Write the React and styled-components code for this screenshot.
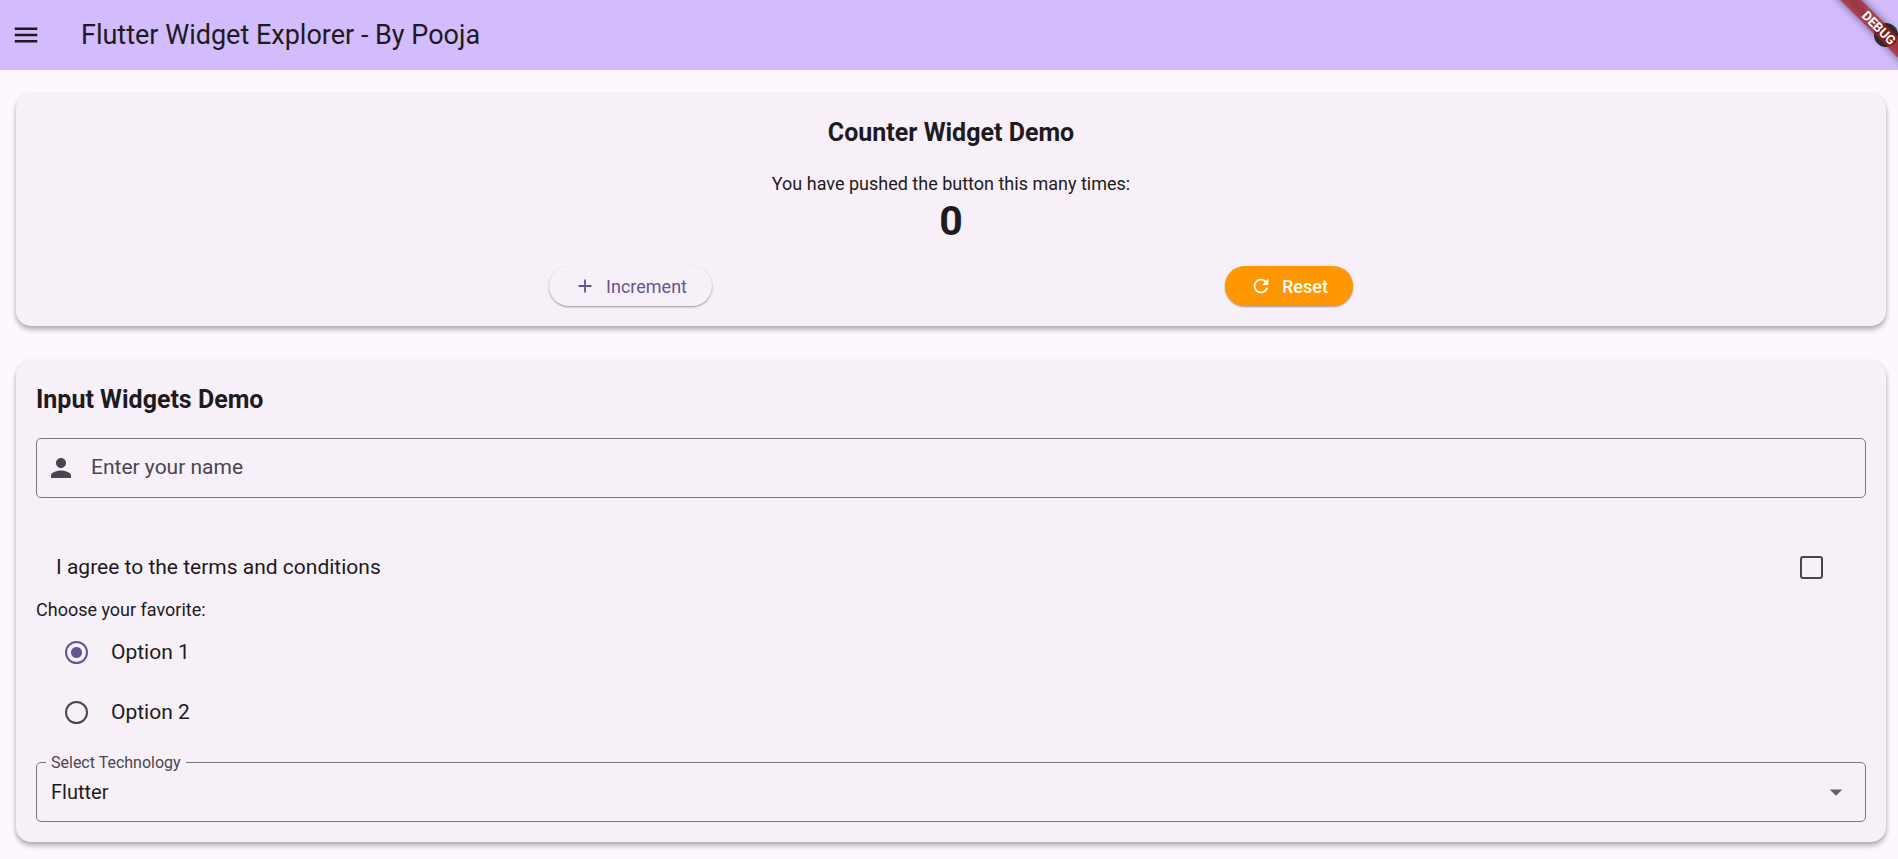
import React, { useState } from "react";
import styled, { createGlobalStyle, css } from "styled-components";

const GlobalStyle = createGlobalStyle`
  *, *::before, *::after { box-sizing: border-box; }
  body {
    margin: 0;
    background: #fef7ff;
    color: #1d1b20;
    font-family: Roboto, "Liberation Sans", sans-serif;
    font-size: 18px;
    overflow-x: hidden;
  }
`;

const AppBar = styled.header`
  position: relative;
  display: flex;
  align-items: center;
  gap: 30px;
  height: 70px;
  padding: 0 0 0 1px;
  background: #d2bcfd;
  overflow: hidden;
`;

const IconButton = styled.button`
  display: grid;
  place-items: center;
  flex: none;
  width: 50px;
  height: 50px;
  padding: 0;
  border: 0;
  border-radius: 50%;
  background: none;
  color: #1d1b20;
  cursor: pointer;
`;

const ThemeButton = styled(IconButton)`
  margin-left: auto;
  margin-right: -13px;
  color: #333333;
`;

const AppTitle = styled.h1`
  margin: 0;
  font-size: 27px;
  line-height: 36px;
  font-weight: 400;
`;

const DebugBanner = styled.svg`
  position: absolute;
  top: 0;
  right: 0;
  pointer-events: none;
`;

const Page = styled.main`
  display: flex;
  flex-direction: column;
  gap: 35px;
  padding: 24px 12px 16px 16px;
`;

const Card = styled.section`
  display: flex;
  flex-direction: column;
  align-items: ${(p) => (p.$centered ? "center" : "stretch")};
  padding: 20px;
  border-radius: 15px;
  background: #f7f0f9;
  box-shadow: 0 4px 5px rgba(0, 0, 0, 0.24), 0 1px 5px rgba(0, 0, 0, 0.12);
`;

const CardTitle = styled.h2`
  margin: 0 0 20px;
  font-size: 25px;
  line-height: 37px;
  font-weight: 700;
`;

const BodyText = styled.p`
  margin: 0;
  line-height: 25px;
`;

const Count = styled.output`
  font-size: 41px;
  line-height: 50px;
  font-weight: 700;
`;

const ButtonRow = styled.div`
  display: flex;
  justify-content: space-evenly;
  align-self: stretch;
  margin-top: 20px;
`;

const PillButton = styled.button`
  display: flex;
  align-items: center;
  gap: 10px;
  height: 40px;
  padding: 0 25px;
  border: 0;
  border-radius: 20px;
  background: ${(p) => (p.$filled ? "#ff9800" : "#f7f0f9")};
  color: ${(p) => (p.$filled ? "#ffffff" : "#65558f")};
  box-shadow: 0 1px 2px rgba(0, 0, 0, 0.38);
  font: inherit;
  font-weight: ${(p) => (p.$filled ? 500 : 400)};
  cursor: pointer;
`;

const Field = styled.div`
  position: relative;
  display: flex;
  align-items: center;
  height: 60px;
  border: 1px solid #79747e;
  border-radius: 5px;
  color: #49454f;
  &:focus-within { border-color: #65558f; }
`;

const control = css`
  flex: 1;
  align-self: stretch;
  min-width: 0;
  border: 0;
  outline: 0;
  background: none;
  color: #1d1b20;
  font: inherit;
  font-size: 20px;
`;

const TextInput = styled.input`
  ${control}
  padding: 0 15px;
`;

const Select = styled.select`
  ${control}
  appearance: none;
  padding: 0 50px 0 14px;
`;

const FieldLabel = styled.label`
  position: absolute;
  background: #f7f0f9;
  pointer-events: none;
  ${(p) =>
    p.$floating
      ? css`
          top: -10px;
          left: 9px;
          padding: 0 5px;
          font-size: 16px;
          line-height: 20px;
        `
      : css`
          top: 13px;
          left: 54px;
          font-size: 21px;
          line-height: 30px;
        `}
`;

const PersonIcon = styled.svg`
  flex: none;
  margin-left: 9px;
`;

const ArrowIcon = styled.svg`
  position: absolute;
  right: 14px;
  pointer-events: none;
`;

const Tile = styled.label`
  display: flex;
  align-items: center;
  justify-content: ${(p) => (p.$spread ? "space-between" : "flex-start")};
  gap: 23px;
  height: 60px;
  margin-top: ${(p) => (p.$spread ? 39 : 0)}px;
  padding: ${(p) => (p.$spread ? "0 43px 0 20px" : "0 29px")};
  font-size: 21px;
  cursor: pointer;
`;

const Checkbox = styled.input`
  appearance: none;
  flex: none;
  width: 23px;
  height: 23px;
  margin: 0;
  border: 2px solid #49454f;
  border-radius: 3px;
  &:checked {
    border-color: #65558f;
    background: #65558f;
  }
`;

const Radio = styled.input`
  appearance: none;
  flex: none;
  width: 23px;
  height: 23px;
  margin: 0;
  border: 2px solid #49454f;
  border-radius: 50%;
  &:checked {
    border-color: #65558f;
    background: radial-gradient(circle, #65558f 5px, transparent 6px);
  }
`;

const RadioGroup = styled.div`
  margin-bottom: 20px;
`;

export default function App() {
  const [count, setCount] = useState(0);
  const [name, setName] = useState("");
  const [focused, setFocused] = useState(false);
  const [agreed, setAgreed] = useState(false);
  const [option, setOption] = useState("Option 1");
  const [tech, setTech] = useState("Flutter");

  return (
    <>
      <GlobalStyle />
      <AppBar>
        <IconButton aria-label="Open navigation menu">
          <svg width="30" height="30" viewBox="0 0 24 24" fill="currentColor">
            <path d="M3 18h18v-2H3v2zm0-5h18v-2H3v2zm0-7v2h18V6H3z" />
          </svg>
        </IconButton>
        <AppTitle>Flutter Widget Explorer - By Pooja</AppTitle>
        <ThemeButton aria-label="Toggle theme">
          <svg width="30" height="30" viewBox="0 0 30 30" fill="currentColor">
            <circle cx="15" cy="15" r="12" />
          </svg>
        </ThemeButton>
        <DebugBanner width="100" height="70" viewBox="0 0 100 70" aria-hidden="true">
          <defs>
            <filter id="soft" x="-50%" y="-100%" width="200%" height="300%">
              <feGaussianBlur stdDeviation="4" />
            </filter>
          </defs>
          <g transform="translate(113 0) rotate(45)">
            <rect x="-60" y="35" width="120" height="15" fill="#000" opacity="0.5" filter="url(#soft)" />
            <rect x="-60" y="35" width="120" height="15" fill="#b71c1c" opacity="0.63" />
            <text x="-3" y="47" textAnchor="middle" fontSize="13" fontWeight="700" fill="#fff">DEBUG</text>
          </g>
        </DebugBanner>
      </AppBar>
      <Page>
        <Card $centered>
          <CardTitle>Counter Widget Demo</CardTitle>
          <BodyText>You have pushed the button this many times:</BodyText>
          <Count>{count}</Count>
          <ButtonRow>
            <PillButton onClick={() => setCount(count + 1)}>
              <svg width="22" height="22" viewBox="0 0 24 24" fill="currentColor">
                <path d="M19 13h-6v6h-2v-6H5v-2h6V5h2v6h6v2z" />
              </svg>
              Increment
            </PillButton>
            <PillButton $filled onClick={() => setCount(0)}>
              <svg width="22" height="22" viewBox="0 0 24 24" fill="currentColor">
                <path d="M17.65 6.35C16.2 4.9 14.21 4 12 4c-4.42 0-7.99 3.58-7.99 8s3.57 8 7.99 8c3.73 0 6.84-2.55 7.73-6h-2.08c-.82 2.33-3.04 4-5.65 4-3.31 0-6-2.69-6-6s2.69-6 6-6c1.66 0 3.14.69 4.22 1.78L13 11h7V4l-2.35 2.35z" />
              </svg>
              Reset
            </PillButton>
          </ButtonRow>
        </Card>
        <Card>
          <CardTitle>Input Widgets Demo</CardTitle>
          <Field>
            <PersonIcon width="30" height="30" viewBox="0 0 24 24" fill="currentColor">
              <path d="M12 12c2.21 0 4-1.79 4-4s-1.79-4-4-4-4 1.79-4 4 1.79 4 4 4zm0 2c-2.67 0-8 1.34-8 4v2h16v-2c0-2.66-5.33-4-8-4z" />
            </PersonIcon>
            <TextInput
              id="name"
              type="text"
              value={name}
              onChange={(e) => setName(e.target.value)}
              onFocus={() => setFocused(true)}
              onBlur={() => setFocused(false)}
            />
            <FieldLabel htmlFor="name" $floating={focused || name !== ""}>Enter your name</FieldLabel>
          </Field>
          <Tile $spread>
            I agree to the terms and conditions
            <Checkbox type="checkbox" checked={agreed} onChange={(e) => setAgreed(e.target.checked)} />
          </Tile>
          <BodyText id="favorite">Choose your favorite:</BodyText>
          <RadioGroup role="radiogroup" aria-labelledby="favorite">
            {["Option 1", "Option 2"].map((o) => (
              <Tile key={o}>
                <Radio type="radio" name="favorite" checked={option === o} onChange={() => setOption(o)} />
                {o}
              </Tile>
            ))}
          </RadioGroup>
          <Field>
            <Select id="tech" value={tech} onChange={(e) => setTech(e.target.value)}>
              <option>Flutter</option>
              <option>React Native</option>
              <option>Kotlin</option>
            </Select>
            <FieldLabel htmlFor="tech" $floating>Select Technology</FieldLabel>
            <ArrowIcon width="30" height="30" viewBox="0 0 24 24" fill="#616161">
              <path d="M7 10l5 5 5-5z" />
            </ArrowIcon>
          </Field>
        </Card>
      </Page>
    </>
  );
}
